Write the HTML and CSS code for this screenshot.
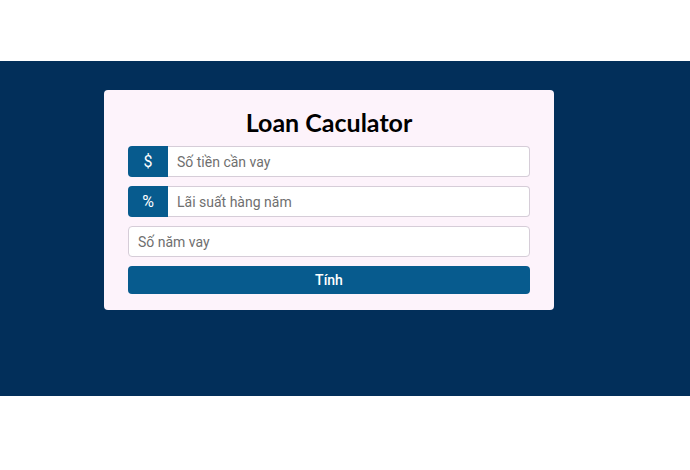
FILE: index.html
```html
<!DOCTYPE html>
<html>
<head>
<meta charset="utf-8">
<link rel="stylesheet" href="styles.css">
</head>
<body>
<div class="top"></div>
<main class="band">
  <form class="card">
    <h1 class="title">Loan Caculator</h1>
    <div class="group">
      <span class="prefix">$</span>
      <input class="field" type="text" placeholder="Số tiền cần vay">
    </div>
    <div class="group">
      <span class="prefix">%</span>
      <input class="field" type="text" placeholder="Lãi suất hàng năm">
    </div>
    <div class="group">
      <input class="field solo" type="text" placeholder="Số năm vay">
    </div>
    <button class="btn" type="button">Tính</button>
  </form>
</main>
<div class="bottom"></div>
</body>
</html>
```
FILE: styles.css
```css
html, body { margin: 0; padding: 0; background: #fff; }
body { font-family: Roboto, "Liberation Sans", Arial, sans-serif; }
.top { height: 61px; }
.band {
  background: #022f5a;
  height: 335px;
  padding-top: 29px;
  box-sizing: border-box;
}
.card {
  margin-left: 104px;
  width: 450px;
  box-sizing: border-box;
  background: #fdf3fb;
  border-radius: 4px;
  padding: 16px 24px 16px;
  display: flex;
  flex-direction: column;
  gap: 9px;
}
.title {
  margin: 2px 0 0;
  text-align: center;
  font-family: Lato, "Open Sans", sans-serif;
  font-weight: 700;
  font-size: 25px;
  line-height: 29px;
  color: #000;
}
.group {
  display: flex;
  height: 31px;
}
.prefix {
  width: 40px;
  background: #075b8e;
  color: #fff;
  display: flex;
  align-items: center;
  justify-content: center;
  font-size: 16px;
  border-radius: 4px 0 0 4px;
}
.field {
  flex: 1;
  min-width: 0;
  border: 1px solid #d6cdd8;
  border-left: none;
  border-radius: 0 4px 4px 0;
  background: #fff;
  padding: 0 9px;
  font-family: Roboto, "Liberation Sans", Arial, sans-serif;
  font-size: 14px;
  outline: none;
}
.field.solo { border-left: 1px solid #d6cdd8; border-radius: 4px; }
.field::placeholder { color: #6f6f6f; }
.btn {
  margin-top: 0;
  height: 28px;
  border: none;
  border-radius: 4px;
  background: #075b8e;
  color: #fff;
  font-family: Roboto, "Liberation Sans", Arial, sans-serif;
  font-size: 14px;
  font-weight: 500;
}
```
